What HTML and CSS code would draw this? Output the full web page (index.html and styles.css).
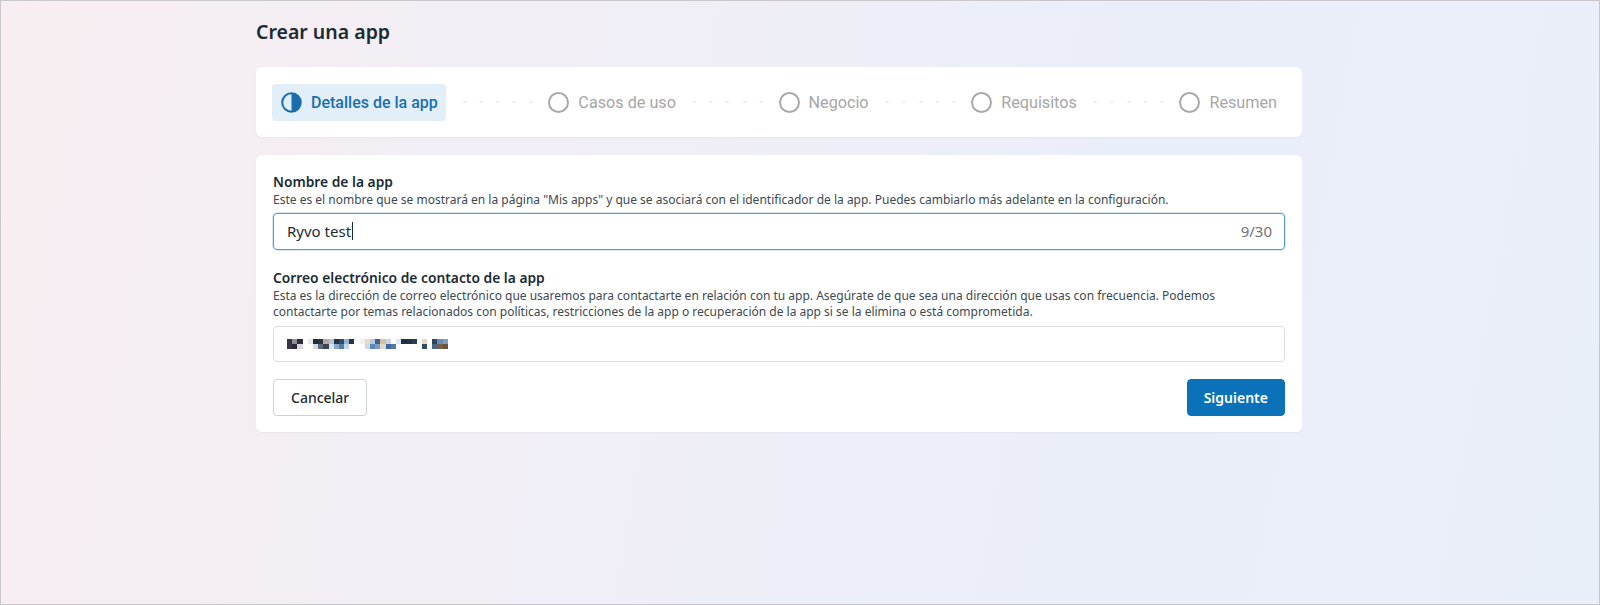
FILE: index.html
```html
<!DOCTYPE html>
<html lang="es">
<head>
  <meta charset="UTF-8">
  <title>Crear una app</title>
  <link rel="stylesheet" href="styles.css">
</head>
<body>
  <div class="page">
    <main class="wrap">
      <h1 class="title">Crear una app</h1>

      <div class="card steps">
        <div class="step active">
          <svg class="step-icon" width="21" height="21" viewBox="0 0 21 21">
            <circle cx="10.5" cy="10.5" r="9.3" fill="none" stroke="#1a6eb0" stroke-width="2"/>
            <path d="M10.5 1.2 A9.3 9.3 0 0 1 10.5 19.8 Z" fill="#1a6eb0"/>
          </svg>
          <span>Detalles de la app</span>
        </div>
        <div class="dots"></div>
        <div class="step">
          <span class="ring"></span>
          <span>Casos de uso</span>
        </div>
        <div class="dots"></div>
        <div class="step">
          <span class="ring"></span>
          <span>Negocio</span>
        </div>
        <div class="dots"></div>
        <div class="step">
          <span class="ring"></span>
          <span>Requisitos</span>
        </div>
        <div class="dots"></div>
        <div class="step">
          <span class="ring"></span>
          <span>Resumen</span>
        </div>
      </div>

      <div class="card form">
        <div class="field">
          <div class="label">Nombre de la app</div>
          <div class="help">Este es el nombre que se mostrará en la página "Mis apps" y que se asociará con el identificador de la app. Puedes cambiarlo más adelante en la configuración.</div>
          <div class="input focused">
            <span class="value">Ryvo test<span class="caret"></span></span>
            <span class="count">9/30</span>
          </div>
        </div>

        <div class="field last">
          <div class="label">Correo electrónico de contacto de la app</div>
          <div class="help">Esta es la dirección de correo electrónico que usaremos para contactarte en relación con tu app. Asegúrate de que sea una dirección que usas con frecuencia. Podemos contactarte por temas relacionados con políticas, restricciones de la app o recuperación de la app si se la elimina o está comprometida.</div>
          <div class="input">
            <!-- correo pixelado -->
            <div class="pixels">
              <i style="background:#3c3344"></i><i style="background:#8c8c9c"></i><i style="background:#2a2f3a"></i><i></i><i style="background:#e6e8ee"></i><i style="background:#1f2937"></i><i style="background:#2a3442"></i><i style="background:#b8a8a0"></i><i style="background:#a9c6e6"></i><i style="background:#243240"></i><i style="background:#2a4a6a"></i><i style="background:#99b4cc"></i><i style="background:#243443"></i><i></i><i style="background:#eef0f4"></i><i style="background:#e8dcc8"></i><i style="background:#b8c8da"></i><i style="background:#3e5f86"></i><i style="background:#d8c0a0"></i><i style="background:#c9d6e6"></i><i></i><i style="background:#e4e8ee"></i><i style="background:#1d3040"></i><i style="background:#203443"></i><i style="background:#2b3e50"></i><i></i><i style="background:#e8d8bc"></i><i></i><i style="background:#2f4660"></i><i style="background:#6e8db0"></i><i style="background:#7da0c0"></i>
              <i style="background:#3c3344"></i><i style="background:#2c2838"></i><i style="background:#dcd8e0"></i><i></i><i></i><i style="background:#d4d8e0"></i><i style="background:#5f6b7a"></i><i style="background:#3c4554"></i><i style="background:#d8e4ee"></i><i style="background:#8aa6c4"></i><i style="background:#4d7fa8"></i><i style="background:#c8d6e4"></i><i></i><i></i><i></i><i style="background:#cfd8e6"></i><i style="background:#5c88b8"></i><i style="background:#7a9bc0"></i><i style="background:#e0d8cc"></i><i style="background:#3c6aa0"></i><i style="background:#5378a8"></i><i></i><i></i><i></i><i></i><i></i><i style="background:#2d4a66"></i><i></i><i style="background:#4a6688"></i><i style="background:#7d5f44"></i><i style="background:#6b5440"></i>
            </div>
          </div>
        </div>

        <div class="actions">
          <button class="btn">Cancelar</button>
          <button class="btn primary">Siguiente</button>
        </div>
      </div>
    </main>
  </div>
</body>
</html>
```

FILE: styles.css
```css
* {
  box-sizing: border-box;
}
html, body {
  margin: 0;
  height: 100%;
}
body {
  font-family: "Noto Sans", sans-serif;
  color: #1c2b33;
}
.page {
  height: 605px;
  border: 1px solid #c9c6cc;
  background: linear-gradient(100deg, #f8eef2 0%, #f1eef6 35%, #eaeef9 70%, #e9eff9 100%);
}
.wrap {
  width: 1046px;
  margin-left: 255px;
  padding-top: 17px;
}
.title {
  margin: 0 0 21px;
  font-size: 19.5px;
  font-weight: 600;
  line-height: 28px;
}
.card {
  background: #fff;
  border-radius: 6px;
  box-shadow: 0 1px 2px rgba(0, 0, 0, 0.04);
}

/* pasos */
.steps {
  display: flex;
  align-items: center;
  height: 70px;
  padding: 0 25px 0 16px;
}
.step {
  display: flex;
  align-items: center;
  gap: 9px;
  font-family: Roboto, sans-serif;
  font-size: 16.2px;
  color: #a6a6a6;
  white-space: nowrap;
}
.step.active {
  height: 37px;
  padding: 0 8px 0 9px;
  border-radius: 4px;
  background: #e2eef8;
  color: #1a6eb0;
  font-size: 16px;
  font-weight: 500;
}
.ring {
  width: 21px;
  height: 21px;
  border: 2px solid #a8a8a8;
  border-radius: 50%;
}
.dots {
  flex: 1;
  height: 2px;
  margin: 0 10px;
  background-image: radial-gradient(circle, #e2e3e8 1px, transparent 1.2px);
  background-size: 16.7px 2px;
  background-repeat: repeat-x;
}

/* formulario */
.form {
  margin-top: 18px;
  padding: 17px 17px 16px;
}
.field {
  margin-bottom: 18px;
}
.field.last {
  margin-bottom: 16.5px;
}
.label {
  font-size: 13.8px;
  font-weight: 600;
  line-height: 20px;
}
.help {
  padding-right: 12px;
  font-size: 12px;
  line-height: 16.7px;
  color: #3c4a52;
  margin-bottom: 4.5px;
}
.input {
  display: flex;
  align-items: center;
  justify-content: space-between;
  height: 36.5px;
  padding: 0 12px 0 13px;
  border: 1px solid #dcdde0;
  border-radius: 4px;
  font-size: 15px;
}
.input.focused {
  border-color: #5b9bcf;
  box-shadow: 0 0 0 1px rgba(91, 155, 207, 0.25);
}
.caret {
  display: inline-block;
  width: 1px;
  height: 18px;
  margin-left: 1px;
  background: #1c2b33;
  vertical-align: -3px;
}
.count {
  color: #6b7378;
}
.pixels {
  display: grid;
  grid-template-columns: repeat(31, 5.2px);
  grid-auto-rows: 5px;
}
.pixels i {
  display: block;
}
.actions {
  display: flex;
  justify-content: space-between;
}
.btn {
  height: 37px;
  padding: 0 17px;
  font-family: inherit;
  font-size: 14px;
  font-weight: 500;
  color: #1c2b33;
  background: #fff;
  border: 1px solid #cbd2d9;
  border-radius: 4px;
}
.btn.primary {
  padding: 0 16px;
  background: #0b72b9;
  border-color: #0b72b9;
  color: #fff;
  font-weight: 600;
}
```
